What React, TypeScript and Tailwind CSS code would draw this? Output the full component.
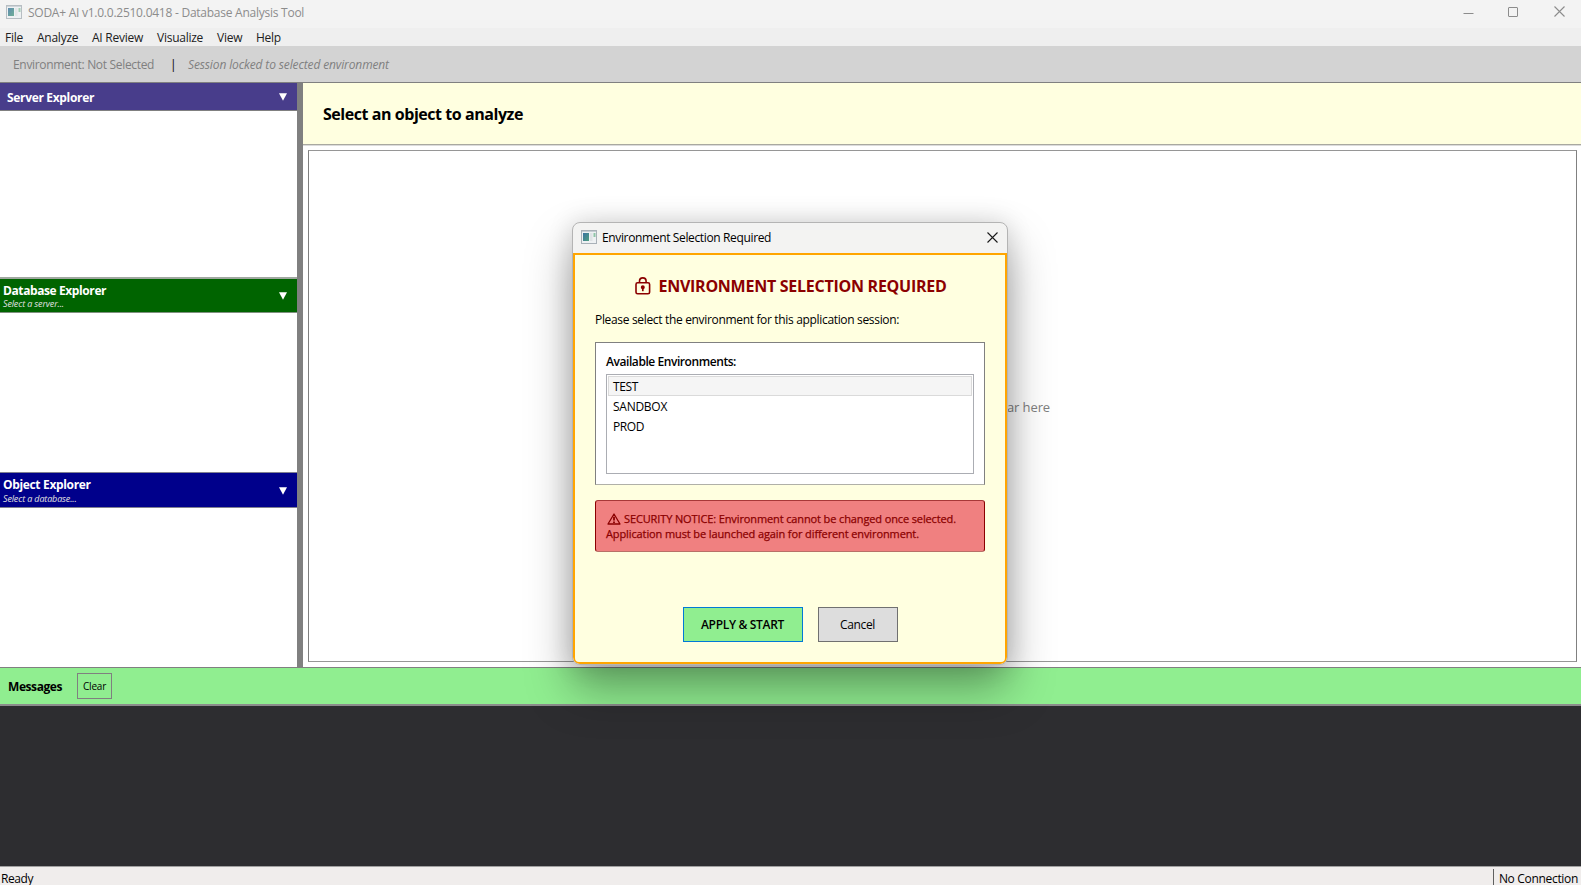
import type { ReactNode } from "react";

function AppIcon({ faded = false }: { faded?: boolean }) {
  return (
    <svg width="16" height="14" viewBox="0 0 16 14" className={faded ? "mt-[-4px] shrink-0 opacity-80" : "mt-[-2px] shrink-0"}>
      <defs>
        <linearGradient id="screen" x1="0" y1="0" x2="1" y2="1">
          <stop offset="0" stopColor="#3a72a0" />
          <stop offset="1" stopColor="#4f9f80" />
        </linearGradient>
      </defs>
      <rect x="0.5" y="0.5" width="15" height="13" fill="#eef1f3" stroke="#a9b1b8" />
      <rect x="1" y="1" width="14" height="1" fill="#c6cdd3" />
      <rect x="2" y="3" width="6" height="8" fill="url(#screen)" />
      <rect x="9" y="3" width="2.5" height="8" fill="#dfe3e6" />
      <rect x="12.5" y="3" width="2" height="4" fill="#8fc5a8" />
    </svg>
  );
}

function CloseGlyph({ color }: { color: string }) {
  return (
    <svg width="11" height="11" viewBox="0 0 11 11" className="shrink-0">
      <path d="M.5 .5 L10.5 10.5 M10.5 .5 L.5 10.5" stroke={color} strokeWidth="1.1" fill="none" />
    </svg>
  );
}

function Arrow() {
  return (
    <svg width="8" height="8" viewBox="0 0 8 8" className="mt-px mr-[10px] shrink-0">
      <path d="M0 0.3H8L4 7.8Z" fill="#fff" />
    </svg>
  );
}

function ExplorerHeader({ className, children }: { className: string; children: ReactNode }) {
  return (
    <div className={`flex shrink-0 items-center justify-between text-white ${className}`}>
      {children}
      <Arrow />
    </div>
  );
}

function EnvironmentDialog() {
  return (
    <div className="absolute top-[222px] left-[572px] flex h-[443px] w-[436px] flex-col overflow-hidden rounded-[8px] border border-[#b4b4b4] bg-[#f3f3f2] shadow-[0_24px_46px_rgba(0,0,0,0.34),0_0_26px_rgba(0,0,0,0.14)]">
      <div className="flex h-[30px] shrink-0 items-center pr-[9px] pl-2">
        <AppIcon />
        <span className="ml-[5px] flex-1 text-[12px] tracking-[-0.36px] text-black">Environment Selection Required</span>
        <div className="mt-[-2px]">
          <CloseGlyph color="#1a1a1a" />
        </div>
      </div>
      <div className="flex flex-1 flex-col rounded-b-[6px] border-2 border-[#ffa500] bg-[#ffffe0] px-5 pt-[21px]">
        <div className="flex h-5 items-center justify-center pl-[2px]">
          <svg width="16" height="18" viewBox="0 0 16 18" fill="none" stroke="#8b0000" strokeWidth="1.6" className="mr-[7px] shrink-0">
            <rect x="1" y="5.8" width="13.6" height="11" rx="1.6" />
            <path d="M4.5 5.8V4.2a3.3 3.3 0 0 1 6.6 0V5.8" />
            <path d="M7.8 10v4.2" strokeWidth="1.7" />
            <circle cx="7.8" cy="10.3" r="1.2" fill="#8b0000" />
          </svg>
          <span className="text-[16px] leading-5 font-bold tracking-[-0.26px] text-[#8b0000]">ENVIRONMENT SELECTION REQUIRED</span>
        </div>
        <p className="mt-[16px] h-4 text-[12px] leading-4 tracking-[-0.33px] text-black">Please select the environment for this application session:</p>

        <section className="mt-[14px] flex h-[143px] shrink-0 flex-col border border-[#808080] border-b-[#b0b0a8] bg-white px-[10px] pt-[11px] pb-[10px]">
          <h2 className="h-4 text-[12px] leading-4 font-semibold tracking-[-0.43px] text-black">Available Environments:</h2>
          <ul className="mt-1 flex-1 border border-[#abadb3] p-px text-[12px] leading-[20px] text-black">
            <li className="h-5 border border-[#dadada] bg-[#f5f5f5] pl-1 tracking-[-0.37px]">TEST</li>
            <li className="h-5 border border-transparent pl-1 tracking-[-0.27px]">SANDBOX</li>
            <li className="h-5 border border-transparent pl-1 tracking-[-0.4px]">PROD</li>
          </ul>
        </section>

        <section className="mt-[15px] h-[52px] shrink-0 rounded-[3px] border border-[#8b0000] border-t-[#a83838] border-b-[#b87068] bg-[#f08080] px-[10px] pt-[10px] text-[11px] leading-[15px] font-medium text-[#8b0000] [-webkit-text-stroke:0.25px_#8b0000]">
          <p className="flex items-center tracking-[-0.12px] whitespace-nowrap">
            <svg width="14" height="12" viewBox="0 0 14 12" fill="none" stroke="#8b0000" strokeWidth="1.3" className="mt-px mr-[3px] ml-px shrink-0">
              <path d="M7 1L13 11H1Z" strokeLinejoin="round" />
              <path d="M7 3.8V7.6M7 8.5V9.9" strokeWidth="1.8" />
            </svg>
            SECURITY NOTICE: Environment cannot be changed once selected.
          </p>
          <p className="tracking-[-0.11px] whitespace-nowrap">Application must be launched again for different environment.</p>
        </section>

        <div className="mt-[55px] flex justify-center gap-[15px] text-[12px] text-black">
          <button className="h-[35px] w-[120px] border border-[#0078d7] bg-[#90ee90] font-semibold tracking-[-0.32px]">APPLY &amp; START</button>
          <button className="h-[35px] w-20 border border-[#707070] bg-[#dddddd] tracking-[-0.35px]">Cancel</button>
        </div>
      </div>
    </div>
  );
}

export default function App() {
  return (
    <div className="relative flex h-[885px] w-[1581px] flex-col overflow-hidden bg-white font-['Open_Sans','Noto_Sans',sans-serif] text-[12px]">
      <header className="flex h-7 shrink-0 items-center bg-[#f3f3f3] pr-[16px] pl-[6px] text-[#8c8c8c]">
        <AppIcon faded />
        <span className="mt-[-2px] ml-[6px] flex-1 tracking-[-0.25px]">SODA+ AI v1.0.0.2510.0418 - Database Analysis Tool</span>
        <svg width="11" height="11" viewBox="0 0 11 11" className="mt-[-4px] mr-[34px]">
          <path d="M.5 6.5h10" stroke="#8c8c8c" />
        </svg>
        <svg width="11" height="11" viewBox="0 0 11 11" className="mt-[-5px] mr-[35px]">
          <rect x="0.5" y="1.5" width="9" height="9" rx="0.5" fill="none" stroke="#8c8c8c" />
        </svg>
        <div className="mt-[-5px]">
          <CloseGlyph color="#8c8c8c" />
        </div>
      </header>

      <nav className="flex h-[18px] shrink-0 items-center gap-[14px] bg-[#efefef] pt-[2px] pl-[5px] leading-4 tracking-[-0.25px] text-[#212121]">
        <span className="w-[18px]">File</span>
        <span className="w-[41px]">Analyze</span>
        <span className="w-[51px] whitespace-nowrap">AI Review</span>
        <span className="w-[46px]">Visualize</span>
        <span className="w-[25px]">View</span>
        <span>Help</span>
      </nav>

      <div className="flex h-[37px] shrink-0 items-center border-b border-[#808080] bg-[#d3d3d3] pt-[2px] pl-[13px] text-[#808080]">
        <span className="w-[142px] tracking-[-0.32px] whitespace-nowrap">Environment: Not Selected</span>
        <span className="ml-[15px] w-[18px] text-black">|</span>
        <span className="tracking-[-0.13px] italic">Session locked to selected environment</span>
      </div>

      <main className="flex h-[584px] shrink-0">
        <aside className="flex w-[297px] shrink-0 flex-col">
          <ExplorerHeader className="h-7 border-b border-[#808080] bg-[#483d8b] pl-[7px]">
            <span className="mt-[3px] font-bold tracking-[-0.33px]">Server Explorer</span>
          </ExplorerHeader>
          <div className="h-[166px] shrink-0 bg-white" />
          <ExplorerHeader className="h-9 border-t-2 border-b border-t-[#a0a8a0] border-b-[#809080] bg-[#006400] pl-[3px]">
            <div className="pt-[2px]">
              <p className="h-[15px] leading-[15px] font-bold tracking-[-0.4px]">Database Explorer</p>
              <p className="h-3 text-[9px] leading-3 tracking-[-0.14px] text-[#e0e0e0] italic">Select a server...</p>
            </div>
          </ExplorerHeader>
          <div className="h-[159px] shrink-0 bg-white" />
          <ExplorerHeader className="h-9 border-t border-b border-[#808090] bg-[#00008b] pl-[3px]">
            <div className="pt-px">
              <p className="h-[15px] leading-[15px] font-bold tracking-[-0.34px]">Object Explorer</p>
              <p className="h-3 text-[9px] leading-[13px] tracking-[-0.14px] text-[#e0e0e0] italic">Select a database...</p>
            </div>
          </ExplorerHeader>
          <div className="flex-1 bg-white" />
        </aside>

        <div className="w-[6px] shrink-0 bg-[#808080]" />

        <div className="flex flex-1 flex-col">
          <div className="flex h-[62px] shrink-0 items-center border-b border-[#a9a9a0] bg-[#ffffe0] pl-5">
            <h1 className="text-[16px] font-bold tracking-[-0.45px] text-black">Select an object to analyze</h1>
          </div>
          <div className="flex-1 border-t border-[#dcdcdc] pt-1 pr-1 pb-[5px] pl-[5px]">
            <div className="flex h-full items-center justify-center border border-[#808080] border-t-[#969696] border-b-[#969696] pt-[3px]">
              <span className="text-[13px] tracking-[-0.1px] text-[#808080]">The analysis results will appear here</span>
            </div>
          </div>
        </div>
      </main>

      <div className="flex h-[39px] shrink-0 items-center border-t border-b-2 border-t-[#808080] border-b-[#8c8c8c] bg-[#90ee90] pl-2">
        <span className="w-[69px] pt-[2px] font-bold tracking-[-0.42px] text-black">Messages</span>
        <button className="h-[26px] w-[35px] border border-[#808080] pt-px text-[10px] tracking-[-0.2px] text-black">Clear</button>
      </div>

      <div className="h-[160px] shrink-0 bg-[#2d2d30]" />

      <footer className="flex h-[19px] shrink-0 items-center justify-between border-t border-[#a0a0a0] bg-[#f0edec] pt-[6px] pl-px text-black">
        <span className="leading-3 tracking-[-0.4px]">Ready</span>
        <div className="-mt-1 flex h-4 items-center border-l border-[#606060] pt-1 pr-[3px] pl-[5px]">
          <span className="leading-3 tracking-[-0.32px]">No Connection</span>
        </div>
      </footer>

      <EnvironmentDialog />
    </div>
  );
}
